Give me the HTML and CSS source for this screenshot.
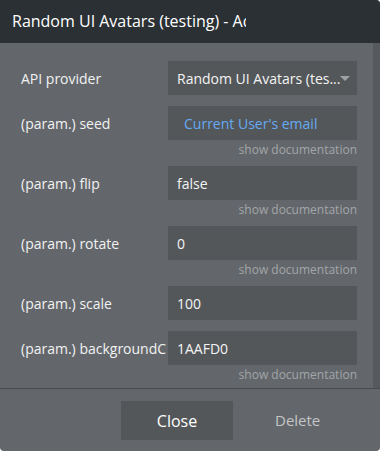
FILE: index.html
```html
<!DOCTYPE html>
<html lang="en">
<head>
    <meta charset="UTF-8">
    <meta name="viewport" content="width=device-width, initial-scale=1.0">
    <title>API call</title>
    <link rel="stylesheet" href="styles.css">
</head>
<body>
    <div class="panel">
        <!-- header -->
        <div class="header">
            <div class="title">Random UI Avatars (testing) - Add avatar</div>
        </div>

        <div class="content">
            <div class="fields">
                <div class="row">
                    <div class="label">API provider</div>
                    <div class="field select">
                        <span class="value">Random UI Avatars (tes...</span>
                        <span class="caret"></span>
                    </div>
                </div>

                <div class="row">
                    <div class="label">(param.) seed</div>
                    <div class="field dynamic">Current User's email</div>
                </div>
                <div class="doc">show documentation</div>

                <div class="row">
                    <div class="label">(param.) flip</div>
                    <div class="field">false</div>
                </div>
                <div class="doc">show documentation</div>

                <div class="row">
                    <div class="label">(param.) rotate</div>
                    <div class="field">0</div>
                </div>
                <div class="doc">show documentation</div>

                <div class="row">
                    <div class="label">(param.) scale</div>
                    <div class="field">100</div>
                </div>

                <div class="row">
                    <div class="label">(param.) backgroundC</div>
                    <div class="field">1AAFD0</div>
                </div>
                <div class="doc">show documentation</div>
            </div>
            <div class="scrollbar"></div>
        </div>

        <!-- footer buttons -->
        <div class="footer">
            <button class="btn-close">Close</button>
            <button class="btn-delete">Delete</button>
        </div>
    </div>
</body>
</html>
```

FILE: styles.css
```css
body {
    margin: 0;
    background-color: #ffffff;
    font-family: "Open Sans", "DejaVu Sans", sans-serif;
}

.panel {
    width: 380px;
    height: 451px;
    display: flex;
    flex-direction: column;
    background-color: #63676b;
    border-radius: 0 4px 4px 4px;
    overflow: hidden;
}

.header {
    height: 43px;
    flex: none;
    display: flex;
    align-items: center;
    padding-left: 12px;
    background-color: #2a3034;
}

.header .title {
    width: 234px;
    overflow: hidden;
    white-space: nowrap;
    font-size: 16px;
    color: #ffffff;
    padding-bottom: 1px;
}

.content {
    display: flex;
    flex: none;
}

.fields {
    flex: 1;
    padding: 18px 16px 6px 21px;
}

.scrollbar {
    width: 7px;
    background-color: #56595d;
}

.row {
    display: flex;
    align-items: center;
    margin-bottom: 11px;
}

.row:has(+ .doc) {
    margin-bottom: 0;
}

.label {
    width: 147px;
    font-size: 14px;
    color: #f2f2f2;
    white-space: nowrap;
    overflow: hidden;
}

.field {
    width: 189px;
    height: 34px;
    box-sizing: border-box;
    display: flex;
    align-items: center;
    padding-left: 9px;
    font-size: 14px;
    color: #f4f4f4;
    background-color: #53575a;
    white-space: nowrap;
}

.field.dynamic {
    padding-left: 16px;
    color: #66aaf2;
}

.field.select {
    justify-content: space-between;
    padding-right: 14px;
}

.caret {
    width: 0;
    height: 0;
    border-left: 5px solid transparent;
    border-right: 5px solid transparent;
    border-top: 5px solid #9ea2a5;
    margin-top: 1px;
}

.doc {
    width: 336px;
    padding-top: 2px;
    text-align: right;
    font-size: 12px;
    line-height: 15px;
    color: #a2a5a8;
    margin-bottom: 9px;
}

.doc:last-child {
    margin-bottom: 0;
}

.footer {
    flex: 1;
    display: flex;
    align-items: flex-start;
    padding: 12px 0 0 121px;
    border-top: 1px solid #484c4f;
}

.footer button {
    font-family: inherit;
    border: none;
    outline: none;
    cursor: pointer;
}

.btn-close {
    width: 112px;
    height: 39px;
    font-size: 16px;
    color: #ffffff;
    background-color: #53575a;
}

.btn-delete {
    margin-left: 30px;
    height: 39px;
    padding: 0 12px 2px;
    font-size: 15px;
    color: #c3c5c7;
    background: none;
}
```
